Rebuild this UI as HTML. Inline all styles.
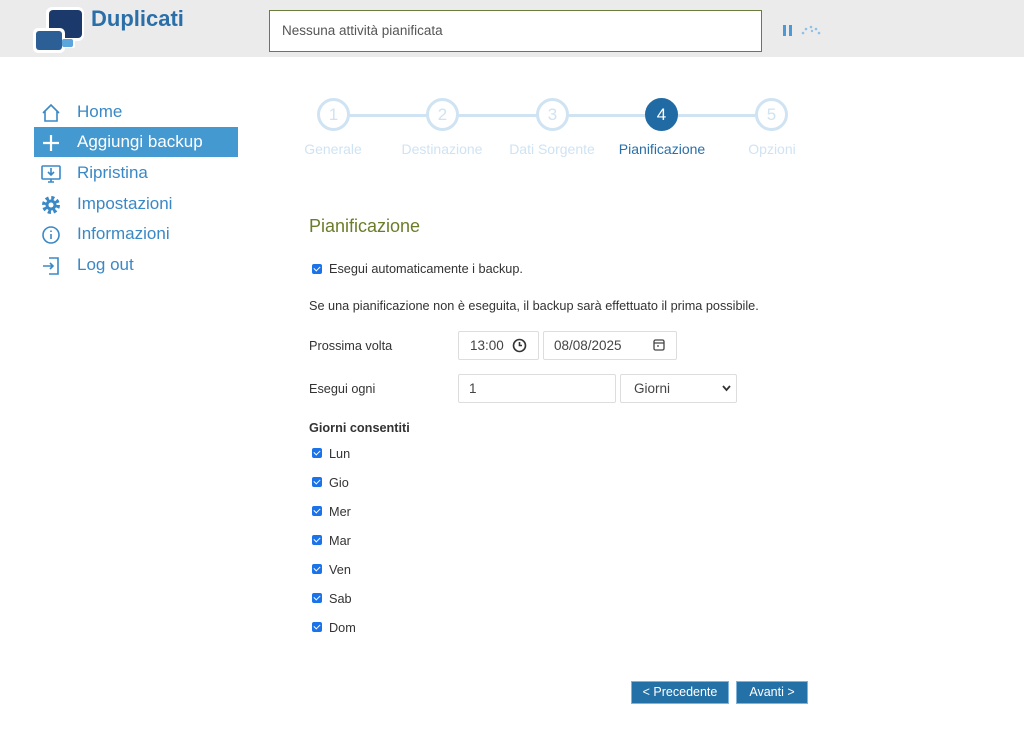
<!DOCTYPE html>
<html><head><meta charset="utf-8"><style>
*{box-sizing:border-box;margin:0;padding:0}
body{width:1024px;height:730px;background:#fff;font-family:"Liberation Sans","DejaVu Sans",sans-serif;position:relative;overflow:hidden;color:#333}
.hdr{position:absolute;left:0;top:0;width:1024px;height:57px;background:#ebebeb}
.abs{position:absolute}
.nav{position:absolute;left:34px;width:204px;height:30px;font-size:17px;color:#3a88c6;line-height:30px;padding-left:43px}
.nav.act{background:#4399d0;color:#fff}
.nav svg{position:absolute;left:6px;top:5px}
.circ{position:absolute;width:33px;height:33px;border-radius:50%;border:3px solid #cfe3f3;background:#fff;color:#cfe3f3;font-size:17px;text-align:center;line-height:27px;top:98px}
.circ.on{background:#216ba5;border-color:#216ba5;color:#fff}
.lbl{position:absolute;top:141px;font-size:14px;color:#cfe3f3;width:120px;text-align:center}
.t{position:absolute;font-size:12.7px;color:#333}
.inp{position:absolute;border:1px solid #ddd;border-radius:2px;height:29px;font-size:13.5px;color:#444;line-height:27px;padding-left:10px}
.cb{position:absolute;left:312px;width:10px;height:10px;background:#1a73e8;border-radius:2px}
.cb:after{content:"";position:absolute;left:3px;top:1px;width:3px;height:5px;border:solid #fff;border-width:0 1.6px 1.6px 0;transform:rotate(45deg)}
.btn{position:absolute;top:681px;height:23px;background:#2471a8;border:1px solid #7fb3d9;color:#fff;font-size:12.5px;text-align:center;line-height:21px}
</style></head><body>
<div class="hdr"></div>
<svg class="abs" style="left:33px;top:6px" width="52" height="48">
<rect x="13" y="1" width="38" height="34" rx="6" fill="#fff"/><rect x="16" y="4" width="33" height="28" rx="4" fill="#1b3a6b"/>
<rect x="0" y="22" width="32" height="25" rx="5" fill="#fff"/><rect x="3" y="25" width="26" height="19" rx="3" fill="#2c5f96"/>
<rect x="29" y="32" width="13" height="10" rx="2" fill="#fff"/><rect x="29" y="33" width="11" height="8" rx="2" fill="#5aa6dc"/></svg>
<div class="abs" style="left:91px;top:6px;font-size:22px;font-weight:bold;color:#2a6fa8">Duplicati</div>
<div class="abs" style="left:269px;top:10px;width:493px;height:42px;background:#fff;border:1px solid #6b7d3c;font-size:13.5px;color:#555;line-height:40px;padding-left:12px">Nessuna attività pianificata</div>
<div class="abs" style="left:783px;top:25px;width:3px;height:11px;background:#4b9ad6"></div>
<div class="abs" style="left:789px;top:25px;width:3px;height:11px;background:#4b9ad6"></div>
<svg class="abs" style="left:800px;top:24px" width="22" height="12" fill="#8ec0e6"><circle cx="3" cy="9" r="1.3"/><circle cx="6" cy="5" r="1.3"/><circle cx="11" cy="3" r="1.3"/><circle cx="16" cy="5" r="1.3"/><circle cx="19" cy="9" r="1.3"/><circle cx="12" cy="7" r="1.2"/></svg>

<div class="nav" style="top:97px"><svg width="22" height="22" fill="none" stroke="#3a88c6" stroke-width="1.6"><path d="M3 11 L11 3 L19 11 M5 9 V19 H17 V9"/></svg>Home</div>
<div class="nav act" style="top:127px"><svg width="22" height="22" stroke="#fff" stroke-width="2.2"><path d="M11 3V19M3 11H19"/></svg>Aggiungi backup</div>
<div class="nav" style="top:158px"><svg width="22" height="22" fill="none" stroke="#3a88c6" stroke-width="1.6"><rect x="2" y="3" width="18" height="13" rx="1"/><path d="M11 5V12M8 9L11 12L14 9M8 19H14M11 16V19"/></svg>Ripristina</div>
<div class="nav" style="top:189px"><svg width="22" height="22"><circle cx="11" cy="11" r="7" fill="none" stroke="#3a88c6" stroke-width="4" stroke-dasharray="3 2.5"/><circle cx="11" cy="11" r="5.5" fill="#3a88c6"/><circle cx="11" cy="11" r="2.5" fill="#fff"/></svg>Impostazioni</div>
<div class="nav" style="top:219px"><svg width="22" height="22" fill="none" stroke="#3a88c6" stroke-width="1.6"><circle cx="11" cy="11" r="8"/><path d="M11 10V15M11 6.5V8"/></svg>Informazioni</div>
<div class="nav" style="top:250px"><svg width="22" height="22" fill="none" stroke="#3a88c6" stroke-width="1.6"><path d="M9 3H18V19H9M3 11H13M10 8L13 11L10 14"/></svg>Log out</div>

<div class="abs" style="left:340px;top:114px;width:420px;height:3px;background:#cfe3f3"></div>
<div class="circ" style="left:317px">1</div>
<div class="circ" style="left:426px">2</div>
<div class="circ" style="left:536px">3</div>
<div class="circ on" style="left:645px">4</div>
<div class="circ" style="left:755px">5</div>
<div class="lbl" style="left:273px">Generale</div>
<div class="lbl" style="left:382px">Destinazione</div>
<div class="lbl" style="left:492px">Dati Sorgente</div>
<div class="lbl" style="left:602px;color:#2a6fa8">Pianificazione</div>
<div class="lbl" style="left:712px">Opzioni</div>

<div class="abs" style="left:309px;top:216px;font-size:18px;color:#6b7d2a">Pianificazione</div>
<div class="cb" style="top:264px"></div><div class="t" style="left:329px;top:262px">Esegui automaticamente i backup.</div>
<div class="t" style="left:309px;top:299px">Se una pianificazione non è eseguita, il backup sarà effettuato il prima possibile.</div>
<div class="t" style="left:309px;top:339px">Prossima volta</div>
<div class="inp" style="left:458px;top:331px;width:81px;padding-left:11px">13:00</div>
<svg class="abs" style="left:512px;top:338px" width="15" height="15" fill="none" stroke="#333" stroke-width="1.6"><circle cx="7.5" cy="7.5" r="6"/><path d="M7.5 4V7.5H10"/></svg>
<div class="inp" style="left:543px;top:331px;width:134px">08/08/2025</div>
<svg class="abs" style="left:653px;top:339px" width="12" height="12" fill="none" stroke="#444" stroke-width="1.3"><rect x="1" y="1" width="10" height="10" rx="1.5"/><path d="M1 4H11M4 7H6"/></svg>
<div class="t" style="left:309px;top:382px">Esegui ogni</div>
<div class="inp" style="left:458px;top:374px;width:158px">1</div>
<div class="inp" style="left:620px;top:374px;width:117px;padding-left:13px">Giorni</div>
<svg class="abs" style="left:722px;top:385px" width="9" height="7" fill="none" stroke="#333" stroke-width="1.8"><path d="M1 1L4.5 5L8 1"/></svg>
<div class="t" style="left:309px;top:421px;font-weight:bold">Giorni consentiti</div>
<div class="cb" style="top:448px"></div><div class="t" style="left:329px;top:447px">Lun</div>
<div class="cb" style="top:477px"></div><div class="t" style="left:329px;top:476px">Gio</div>
<div class="cb" style="top:506px"></div><div class="t" style="left:329px;top:505px">Mer</div>
<div class="cb" style="top:535px"></div><div class="t" style="left:329px;top:534px">Mar</div>
<div class="cb" style="top:564px"></div><div class="t" style="left:329px;top:563px">Ven</div>
<div class="cb" style="top:593px"></div><div class="t" style="left:329px;top:592px">Sab</div>
<div class="cb" style="top:622px"></div><div class="t" style="left:329px;top:621px">Dom</div>
<div class="btn" style="left:631px;width:98px">&lt; Precedente</div>
<div class="btn" style="left:736px;width:72px">Avanti &gt;</div>
</body></html>
